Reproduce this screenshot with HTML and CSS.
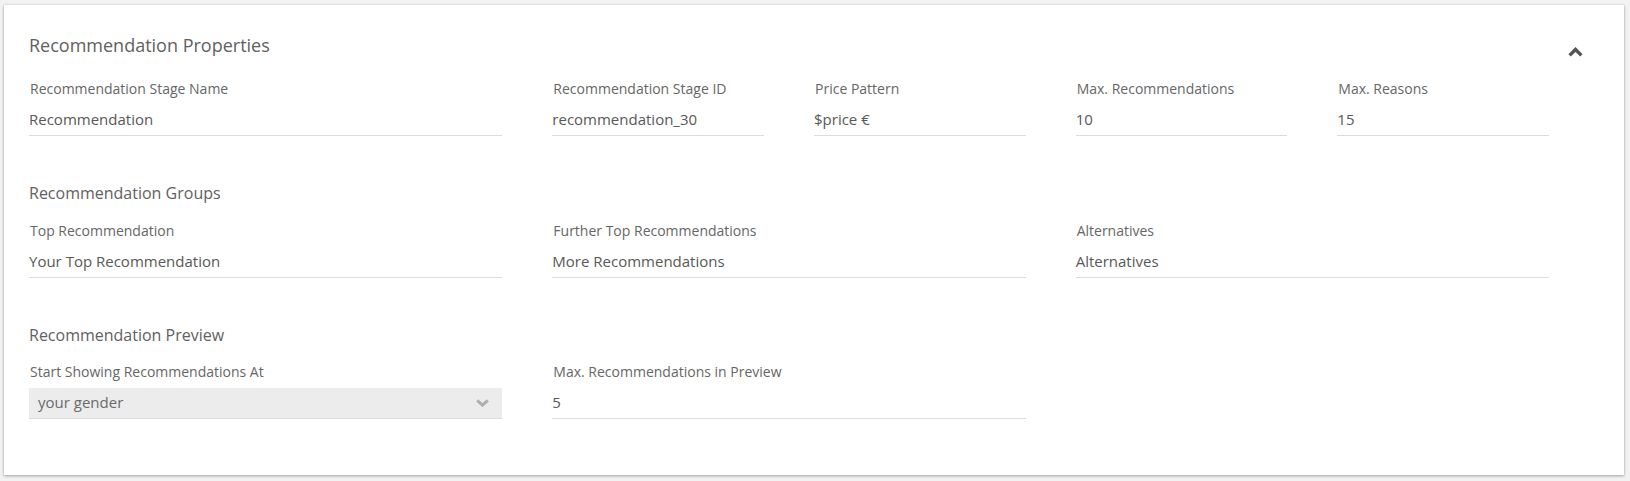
FILE: index.html
```html
<!DOCTYPE html>
<html lang="en">
<head>
<meta charset="utf-8">
<title>Recommendation Properties</title>
<link rel="stylesheet" href="styles.css">
</head>
<body>
<div class="card">
  <div class="card-header">
    <h2 class="title">Recommendation Properties</h2>
    <button class="collapse" aria-label="Collapse">
      <svg width="15" height="10" viewBox="0 0 15 10"><path d="M1.6 8.4 L7.5 2.5 L13.4 8.4" fill="none" stroke="#555" stroke-width="3.4"/></svg>
    </button>
  </div>

  <div class="grid first">
    <div class="field span2">
      <div class="label">Recommendation Stage Name</div>
      <div class="input">Recommendation</div>
    </div>
    <div class="field">
      <div class="label">Recommendation Stage ID</div>
      <div class="input">recommendation_30</div>
    </div>
    <div class="field">
      <div class="label">Price Pattern</div>
      <div class="input">$price €</div>
    </div>
    <div class="field">
      <div class="label">Max. Recommendations</div>
      <div class="input">10</div>
    </div>
    <div class="field">
      <div class="label">Max. Reasons</div>
      <div class="input">15</div>
    </div>
  </div>

  <section class="section">
    <h3 class="subtitle">Recommendation Groups</h3>
    <div class="grid">
      <div class="field span2">
        <div class="label">Top Recommendation</div>
        <div class="input">Your Top Recommendation</div>
      </div>
      <div class="field span2">
        <div class="label">Further Top Recommendations</div>
        <div class="input">More Recommendations</div>
      </div>
      <div class="field span2">
        <div class="label">Alternatives</div>
        <div class="input">Alternatives</div>
      </div>
    </div>
  </section>

  <section class="section">
    <h3 class="subtitle">Recommendation Preview</h3>
    <div class="grid">
      <div class="field span2">
        <div class="label">Start Showing Recommendations At</div>
        <div class="input select">
          <span>your gender</span>
          <svg width="13" height="8" viewBox="0 0 13 8"><path d="M1.2 1.4 L6.5 6.2 L11.8 1.4" fill="none" stroke="#afafaf" stroke-width="3"/></svg>
        </div>
      </div>
      <div class="field span2">
        <div class="label">Max. Recommendations in Preview</div>
        <div class="input">5</div>
      </div>
    </div>
  </section>
</div>
</body>
</html>
```

FILE: styles.css
```css
* {
  box-sizing: border-box;
}

html, body {
  margin: 0;
  padding: 0;
}

body {
  background: #f2f2f2;
  font-family: "Open Sans", "Noto Sans", "Liberation Sans", sans-serif;
  padding: 5px 6px 6px 4px;
}

.card {
  background: #ffffff;
  box-shadow: 0 1px 3px rgba(0, 0, 0, 0.32), 0 0 1px rgba(0, 0, 0, 0.18);
  padding: 28px 41px 56px 25px;
}

.card-header {
  display: flex;
  justify-content: space-between;
  align-items: flex-start;
}

.title {
  margin: 0;
  font-size: 18px;
  line-height: 24px;
  font-weight: 400;
  color: #616161;
}

.collapse {
  border: 0;
  background: none;
  padding: 0;
  margin-top: 14px;
  width: 15px;
  height: 10px;
  display: flex;
  cursor: pointer;
}

.grid {
  display: grid;
  grid-template-columns: repeat(6, 1fr);
  column-gap: 50px;
  margin-right: 34px;
}

.grid.first {
  margin-top: 22px;
}

.span2 {
  grid-column: span 2;
}

.section {
  margin-top: 46px;
}

.subtitle {
  margin: 0 0 16.5px;
  font-size: 16px;
  line-height: 22px;
  font-weight: 400;
  color: #616161;
}

.label {
  font-size: 14px;
  line-height: 20px;
  color: #666666;
  margin-bottom: 6px;
  padding-left: 1px;
}

.input {
  font-size: 15px;
  line-height: 20px;
  color: #585858;
  padding: 4px 0 6px;
  border-bottom: 1px solid #dcdcdc;
}

.input.select {
  background: #ececec;
  color: #6a6a6a;
  padding-left: 9px;
  padding-right: 13px;
  display: flex;
  justify-content: space-between;
  align-items: center;
}

.input.select svg {
  margin-top: 2px;
}
```
